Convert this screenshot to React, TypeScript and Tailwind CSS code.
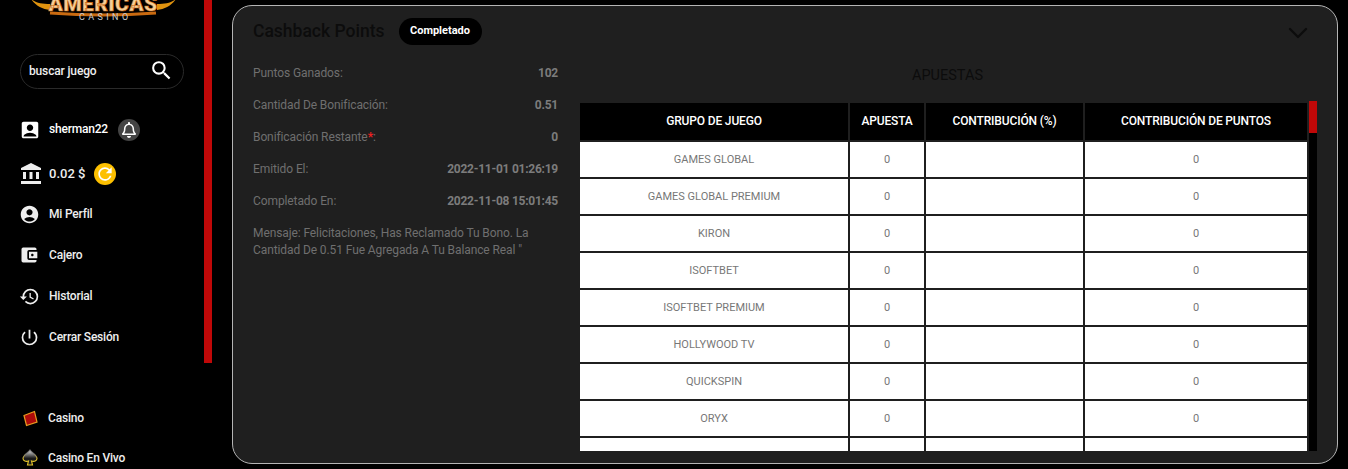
import { ChevronDown } from "lucide-react";
import {
  MdAccountBalance,
  MdAccountBalanceWallet,
  MdAccountBox,
  MdAccountCircle,
  MdHistory,
  MdPowerSettingsNew,
  MdRefresh,
  MdSearch,
} from "react-icons/md";
import { FaRegBell } from "react-icons/fa";

const games = [
  "GAMES GLOBAL",
  "GAMES GLOBAL PREMIUM",
  "KIRON",
  "ISOFTBET",
  "ISOFTBET PREMIUM",
  "HOLLYWOOD TV",
  "QUICKSPIN",
  "ORYX",
];

const details = [
  { label: "Puntos Ganados:", value: "102" },
  { label: "Cantidad De Bonificación:", value: "0.51" },
  { label: "Bonificación Restante", value: "0", star: true },
  { label: "Emitido El:", value: "2022-11-01 01:26:19" },
  { label: "Completado En:", value: "2022-11-08 15:01:45" },
];

function Logo() {
  return (
    <div className="relative h-[22px] w-[204px] overflow-hidden">
      <svg width="204" height="22" viewBox="0 0 204 22" className="absolute left-0 top-0">
        <path d="M31 -1C36 3 42 4 50 4L50 10C42 9 36 6 31 -1Z" fill="#e0930f" />
        <path d="M176 -1C171 3 165 4 157 4L157 10C165 9 171 6 176 -1Z" fill="#e0930f" />
        <path d="M50 13Q103 17 156 13" fill="none" stroke="#c96a10" strokeWidth="3" />
      </svg>
      <div className="absolute left-[44px] top-[-5px] w-[118px] text-center text-[21px] leading-[18px] font-black tracking-[0.4px] text-[#f4cf98] [-webkit-text-stroke:0.6px_#c9650f]">
        AMERICAS
      </div>
      <div className="absolute left-[79px] top-[13px] text-[9px] leading-[9px] tracking-[3.4px] text-[#cccccc]">
        CASINO
      </div>
    </div>
  );
}

function SideRow({ icon, label, className }: { icon: React.ReactNode; label: string; className: string }) {
  return (
    <div className={"flex h-[20px] items-center text-[12px] font-medium tracking-[-0.2px] text-[#eeeeee] " + className}>
      <span className="flex w-[28px] shrink-0 items-center">{icon}</span>
      {label}
    </div>
  );
}

function Sidebar() {
  return (
    <aside className="flex w-[232px] shrink-0">
      <div className="w-[204px]">
        <Logo />
        <div className="ml-[20px] mt-[32px] flex h-[35px] w-[164px] items-center justify-between rounded-full border border-[#2a2a2a] pl-2 pr-[9px]">
          <span className="mb-[2px] text-[12px] font-medium tracking-[-0.15px] text-[#eeeeee]">buscar juego</span>
          <MdSearch size={25} className="mb-[3px] text-white" />
        </div>
        <div className="ml-[21px]">
          <div className="mt-[30px] flex h-[22px] items-center text-[12px] font-medium tracking-[-0.2px] text-white">
            <span className="flex w-[28px] shrink-0"><MdAccountBox size={22} className="-ml-[2px]" /></span>
            <span className="mb-[2px]">sherman22</span>
            <span className="ml-[10px] flex h-[22px] w-[22px] items-center justify-center rounded-full bg-[#444444]">
              <FaRegBell size={16} />
            </span>
          </div>
          <div className="mt-[22px] flex h-[22px] items-center text-[13px] font-medium text-[#eeeeee]">
            <span className="flex w-[28px] shrink-0"><MdAccountBalance size={24} className="-ml-[2px]" /></span>
            0.02 $
            <span className="ml-[9px] flex h-[22px] w-[22px] items-center justify-center rounded-full bg-[#fdc000]">
              <MdRefresh size={20} className="text-white" />
            </span>
          </div>
          <SideRow className="mt-[19px]" label="Mi Perfil" icon={<MdAccountCircle size={21} className="-ml-[2px]" />} />
          <SideRow className="mt-[21px]" label="Cajero" icon={<MdAccountBalanceWallet size={20} className="-ml-[2px]" />} />
          <SideRow className="mt-[21px]" label="Historial" icon={<MdHistory size={21} className="-ml-[2px]" />} />
          <SideRow className="mt-[21px]" label="Cerrar Sesión" icon={<MdPowerSettingsNew size={21} className="-ml-[2px]" />} />
          <SideRow className="mt-[61px] -ml-[1px]" label="Casino" icon={
            <svg width="16" height="17" viewBox="0 0 16 17" className="ml-[2px]">
              <path d="M2 5.5 12.5 1.5 15 12 4.5 15.5Z" fill="#ad0a0a" stroke="#e89a20" strokeWidth="1.2" />
            </svg>
          } />
          <SideRow className="mt-[20px] -ml-[1px]" label="Casino En Vivo" icon={
            <svg width="16" height="18" viewBox="0 0 16 18" className="ml-[2px]">
              <defs>
                <linearGradient id="spadeFill" x1="0" y1="0" x2="0" y2="1">
                  <stop offset="0" stopColor="#e8e8e8" />
                  <stop offset="0.55" stopColor="#1a1a1a" />
                </linearGradient>
                <linearGradient id="spadeEdge" x1="0" y1="0" x2="0" y2="1">
                  <stop offset="0.25" stopColor="#777777" />
                  <stop offset="0.6" stopColor="#e8c62a" />
                </linearGradient>
              </defs>
              <path d="M8 1C10 4 15 6 15 9.5 15 12 12 13 9.5 12L10.5 16H5.5L6.5 12C4 13 1 12 1 9.5 1 6 6 4 8 1Z" fill="url(#spadeFill)" stroke="url(#spadeEdge)" strokeWidth="1.1" />
            </svg>
          } />
        </div>
      </div>
      <div className="h-[363px] w-[8px] bg-[#c00808]" />
    </aside>
  );
}

function BetsTable() {
  return (
    <div className="flex h-[350px] items-start">
      <div className="mt-[2px] h-[348px] w-[727px] overflow-hidden">
        <table className="w-[727px] table-fixed border-separate border-spacing-0 text-center text-[11px]">
          <colgroup>
            <col className="w-[270px]" />
            <col className="w-[76px]" />
            <col className="w-[159px]" />
            <col className="w-[222px]" />
          </colgroup>
          <thead>
            <tr className="h-[39px] bg-black text-[12px] tracking-[-0.15px] text-white">
              <th className="border-b-2 border-r-2 border-[#1f1f1f] pb-[1px] font-medium">GRUPO DE JUEGO</th>
              <th className="border-b-2 border-r-2 border-[#1f1f1f] pb-[1px] font-medium">APUESTA</th>
              <th className="border-b-2 border-r-2 border-[#1f1f1f] pb-[1px] font-medium">CONTRIBUCIÓN (%)</th>
              <th className="border-b-2 border-[#1f1f1f] pb-[1px] font-medium">CONTRIBUCIÓN DE PUNTOS</th>
            </tr>
          </thead>
          <tbody className="bg-white text-[#777777]">
            {games.concat("").map((g, i) => (
              <tr key={i} className="h-[37px]">
                <td className="border-b-2 border-r-2 border-[#1f1f1f] pt-[2px]">{g}</td>
                <td className="border-b-2 border-r-2 border-[#1f1f1f] pt-[2px]">{g && "0"}</td>
                <td className="border-b-2 border-r-2 border-[#1f1f1f]"></td>
                <td className="border-b-2 border-[#1f1f1f] pt-[2px]">{g && "0"}</td>
              </tr>
            ))}
          </tbody>
        </table>
      </div>
      <div className="ml-[2px] h-[350px] w-[8px] bg-black">
        <div className="h-[32px] bg-[#c00808]" />
      </div>
    </div>
  );
}

export default function App() {
  return (
    <div className="flex h-[469px] w-[1348px] overflow-hidden bg-black [font-family:Roboto,sans-serif]">
      <Sidebar />
      <main className="mt-[5px] h-[459px] w-[1106px] rounded-[20px] border border-[#b5b5b5] bg-[#1f1f1f]">
        <div className="ml-[20px] mr-[20px] mt-[12px] flex h-[26px] items-center">
          <h2 className="text-[17.5px] font-medium text-[#0c0c0c]">Cashback Points</h2>
          <span className="ml-[14px] flex h-[27px] w-[83px] items-center justify-center rounded-full bg-black text-[11px] font-bold text-white">
            Completado
          </span>
          <ChevronDown size={32} strokeWidth={1.8} className="ml-auto mr-[3px] mt-[3px] text-[#0c0c0c]" />
        </div>
        <div className="ml-[20px] flex">
          <div className="w-[305px] shrink-0 text-[12px] text-[#6f6f6f]">
            {details.map((d) => (
              <div key={d.label} className="flex h-[32px] items-center justify-between first:mt-[13px]">
                <span className="tracking-[-0.1px]">
                  {d.label}
                  {d.star && <><span className="font-bold text-[#ee2020]">*</span>:</>}
                </span>
                <span className="font-bold tracking-[-0.25px] text-[#7c7c7c]">{d.value}</span>
              </div>
            ))}
            <p className="mt-[8px] leading-[17px] tracking-[-0.1px]">
              Mensaje: Felicitaciones, Has Reclamado Tu Bono. La Cantidad De 0.51 Fue Agregada A Tu Balance Real "
            </p>
          </div>
          <div className="ml-[22px] w-[737px]">
            <div className="mb-[15px] mt-[22px] pr-[2px] text-center text-[14.5px] leading-[20px] text-[#0c0c0c]">APUESTAS</div>
            <BetsTable />
          </div>
        </div>
      </main>
    </div>
  );
}
